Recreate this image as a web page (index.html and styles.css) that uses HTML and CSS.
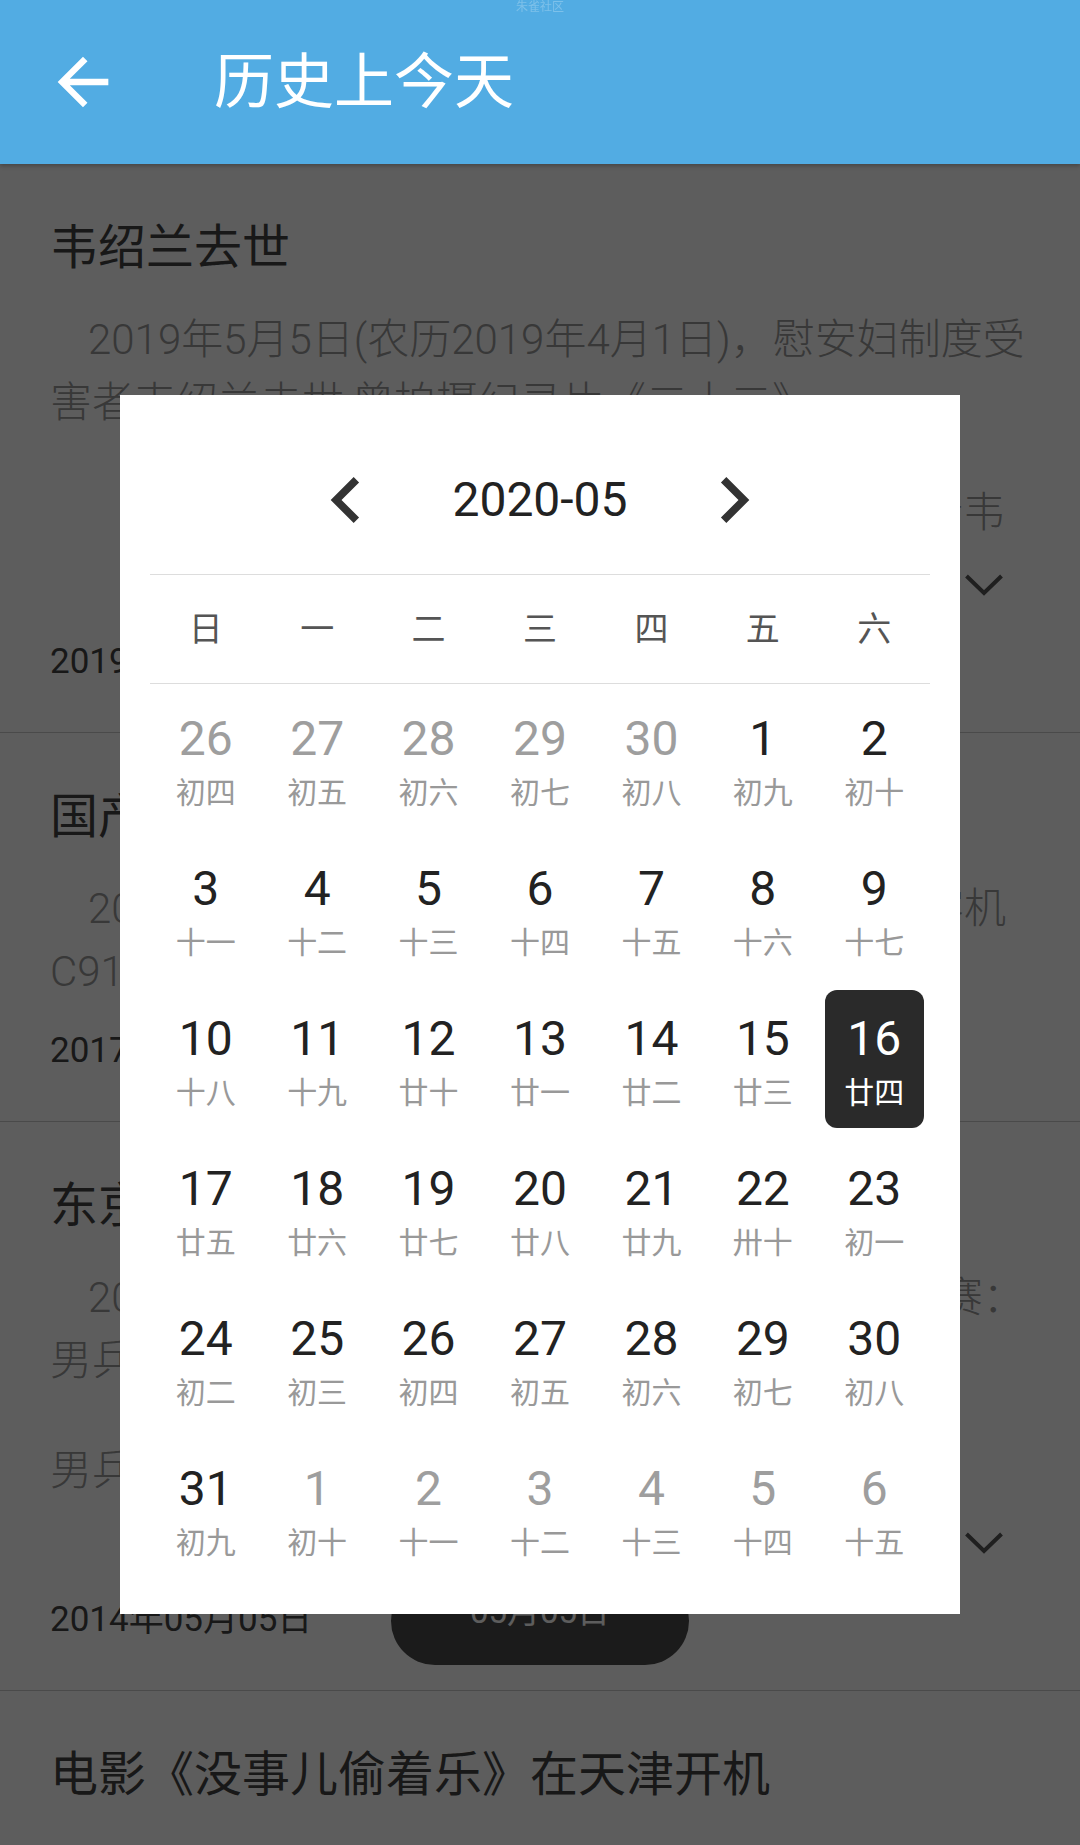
FILE: index.html
```html
<!DOCTYPE html>
<html lang="zh-CN">
<head>
  <meta charset="UTF-8" />
  <meta name="viewport" content="width=device-width, initial-scale=1.0"/>
  <title>历史上今天</title>
  <link rel="stylesheet" href="styles.css">
</head>
<body>
  <header class="topbar">
    <span class="watermark">朱雀社区</span>
    <svg class="back" viewBox="0 0 24 24"><path d="M20 11H7.83l5.59-5.59L12 4l-8 8 8 8 1.41-1.41L7.83 13H20v-2z"/></svg>
    <h1>历史上今天</h1>
  </header>

  <main class="list">
    <section class="event">
      <h2>韦绍兰去世</h2>
      <p class="summary">2019年5月5日(农历2019年4月1日)，慰安妇制度受害者韦绍兰去世,曾拍摄纪录片《二十二》</p>
      <p class="more">　　同年8月,广西荔浦县举行追思会，悼念受害者韦绍兰，众多志愿者自发前来送别。</p>
      <svg class="toggle" viewBox="0 0 48 48"><polyline points="6.5,15 24,32 41.5,15"/></svg>
      <div class="date">2019年05月05日</div>
    </section>

    <section class="event">
      <h2>国产大飞机C919首飞成功</h2>
      <p class="summary">2017年5月5日(农历2017年4月10日)，国产大客机C919在上海浦东国际机场成功首飞。</p>
      <div class="date">2017年05月05日</div>
    </section>

    <section class="event">
      <h2>东京世乒赛中国男团夺冠</h2>
      <p class="summary">2014年5月5日(农历2014年4月7日)，东京世乒赛：男乒决赛中国队3比0击败德国队夺冠。</p>
      <p class="more">男乒队员：马龙、许昕、张继科、樊振东。</p>
      <svg class="toggle" viewBox="0 0 48 48"><polyline points="6.5,15 24,32 41.5,15"/></svg>
      <div class="date">2014年05月05日</div>
    </section>

    <section class="event">
      <h2>电影《没事儿偷着乐》在天津开机</h2>
      <p class="summary">1998年5月5日(农历1998年4月10日)，电影《没事儿偷着乐》在天津开机拍摄。</p>
      <div class="date">1998年05月05日</div>
    </section>
  </main>

  <div class="today">05月05日</div>

  <div class="mask">
    <div class="picker">
      <div class="month">
        <svg viewBox="0 0 24 24"><path d="M15.41 7.41L14 6l-6 6 6 6 1.41-1.41L10.83 12z"/></svg>
        <span>2020-05</span>
        <svg viewBox="0 0 24 24"><path d="M10 6L8.59 7.41 13.17 12l-4.58 4.59L10 18l6-6z"/></svg>
      </div>

      <div class="weekdays">
        <span>日</span><span>一</span><span>二</span><span>三</span><span>四</span><span>五</span><span>六</span>
      </div>

      <div class="days">
        <div class="day other"><span class="num">26</span><span class="lunar">初四</span></div>
        <div class="day other"><span class="num">27</span><span class="lunar">初五</span></div>
        <div class="day other"><span class="num">28</span><span class="lunar">初六</span></div>
        <div class="day other"><span class="num">29</span><span class="lunar">初七</span></div>
        <div class="day other"><span class="num">30</span><span class="lunar">初八</span></div>
        <div class="day"><span class="num">1</span><span class="lunar">初九</span></div>
        <div class="day"><span class="num">2</span><span class="lunar">初十</span></div>

        <div class="day"><span class="num">3</span><span class="lunar">十一</span></div>
        <div class="day"><span class="num">4</span><span class="lunar">十二</span></div>
        <div class="day"><span class="num">5</span><span class="lunar">十三</span></div>
        <div class="day"><span class="num">6</span><span class="lunar">十四</span></div>
        <div class="day"><span class="num">7</span><span class="lunar">十五</span></div>
        <div class="day"><span class="num">8</span><span class="lunar">十六</span></div>
        <div class="day"><span class="num">9</span><span class="lunar">十七</span></div>

        <div class="day"><span class="num">10</span><span class="lunar">十八</span></div>
        <div class="day"><span class="num">11</span><span class="lunar">十九</span></div>
        <div class="day"><span class="num">12</span><span class="lunar">廿十</span></div>
        <div class="day"><span class="num">13</span><span class="lunar">廿一</span></div>
        <div class="day"><span class="num">14</span><span class="lunar">廿二</span></div>
        <div class="day"><span class="num">15</span><span class="lunar">廿三</span></div>
        <div class="day on"><span class="num">16</span><span class="lunar">廿四</span></div>

        <div class="day"><span class="num">17</span><span class="lunar">廿五</span></div>
        <div class="day"><span class="num">18</span><span class="lunar">廿六</span></div>
        <div class="day"><span class="num">19</span><span class="lunar">廿七</span></div>
        <div class="day"><span class="num">20</span><span class="lunar">廿八</span></div>
        <div class="day"><span class="num">21</span><span class="lunar">廿九</span></div>
        <div class="day"><span class="num">22</span><span class="lunar">卅十</span></div>
        <div class="day"><span class="num">23</span><span class="lunar">初一</span></div>

        <div class="day"><span class="num">24</span><span class="lunar">初二</span></div>
        <div class="day"><span class="num">25</span><span class="lunar">初三</span></div>
        <div class="day"><span class="num">26</span><span class="lunar">初四</span></div>
        <div class="day"><span class="num">27</span><span class="lunar">初五</span></div>
        <div class="day"><span class="num">28</span><span class="lunar">初六</span></div>
        <div class="day"><span class="num">29</span><span class="lunar">初七</span></div>
        <div class="day"><span class="num">30</span><span class="lunar">初八</span></div>

        <div class="day"><span class="num">31</span><span class="lunar">初九</span></div>
        <div class="day other"><span class="num">1</span><span class="lunar">初十</span></div>
        <div class="day other"><span class="num">2</span><span class="lunar">十一</span></div>
        <div class="day other"><span class="num">3</span><span class="lunar">十二</span></div>
        <div class="day other"><span class="num">4</span><span class="lunar">十三</span></div>
        <div class="day other"><span class="num">5</span><span class="lunar">十四</span></div>
        <div class="day other"><span class="num">6</span><span class="lunar">十五</span></div>
      </div>
    </div>
  </div>
</body>
</html>
```

FILE: styles.css
```css
* {
  box-sizing: border-box;
}

body {
  margin: 0;
  background: #fff;
  color: #222;
  font-family: Roboto, "Noto Sans CJK SC", sans-serif;
}

/* top bar */
.topbar {
  position: relative;
  z-index: 2;
  display: flex;
  align-items: center;
  height: 164px;
  padding-left: 45px;
  background: #52ace3;
  box-shadow: 0 2px 4px rgba(0, 0, 0, 0.25);
}

.watermark {
  position: absolute;
  top: 0;
  left: 50%;
  transform: translateX(-50%);
  font-size: 12px;
  line-height: 14px;
  color: rgba(255, 255, 255, 0.25);
}

.back {
  display: block;
  width: 76px;
  height: 76px;
  fill: #fff;
}

.topbar h1 {
  margin: 0 0 0 93px;
  padding-top: 2px;
  font-size: 60px;
  font-weight: 400;
  line-height: 60px;
  color: #fff;
}

/* event list */
.list {
  height: calc(100vh - 164px);
  overflow: hidden;
}

.event {
  display: flex;
  flex-direction: column;
  padding: 54px 50px 46px;
  border-bottom: 1px solid #ccc;
}

.event h2 {
  margin: 0;
  font-size: 48px;
  font-weight: 400;
  line-height: 60px;
  color: #444;
  white-space: nowrap;
}

.event p {
  margin: 0;
  font-size: 42px;
  font-weight: 300;
  line-height: 63px;
  color: #999;
}

.event .summary {
  margin-top: 30px;
  text-indent: 38px;
}

.event .more {
  margin-top: 47px;
  max-height: 63px;
  overflow: hidden;
}

.toggle {
  display: block;
  align-self: flex-end;
  width: 48px;
  height: 48px;
  margin: 17px 22px 5px 0;
  fill: none;
  stroke: #555;
  stroke-width: 4;
}

.date {
  margin-top: 24px;
  font-size: 35px;
  line-height: 48px;
  color: #444;
}

.today {
  position: fixed;
  left: 50%;
  bottom: 180px;
  width: 298px;
  height: 88px;
  margin-left: -149px;
  padding-bottom: 18px;
  border-radius: 44px;
  background: #4a4a4a;
  color: #fff;
  font-size: 33px;
  line-height: 70px;
  text-align: center;
}

/* calendar dialog */
.mask {
  position: fixed;
  top: 164px;
  left: 0;
  right: 0;
  bottom: 0;
  z-index: 1;
  display: flex;
  align-items: center;
  justify-content: center;
  background: rgba(0, 0, 0, 0.635);
}

.picker {
  width: 840px;
  padding: 30px;
  background: #fff;
}

.month {
  display: flex;
  align-items: center;
  justify-content: center;
  height: 150px;
  border-bottom: 1px solid #ddd;
}

.month svg {
  width: 92px;
  height: 92px;
  fill: #333;
}

.month span {
  width: 296px;
  font-size: 48px;
  line-height: 1;
  text-align: center;
  color: #222;
}

.weekdays {
  display: grid;
  grid-template-columns: repeat(7, 1fr);
  height: 109px;
  border-bottom: 1px solid #ddd;
  font-size: 34px;
  line-height: 108px;
  text-align: center;
  color: #555;
}

.days {
  display: grid;
  grid-template-columns: repeat(7, 1fr);
}

.day {
  height: 138px;
  margin: 6px;
  padding-top: 21px;
  border-radius: 12px;
  text-align: center;
}

.num {
  display: block;
  font-size: 48px;
  line-height: 56px;
  color: #222;
}

.lunar {
  display: block;
  margin-top: 6px;
  font-size: 30px;
  line-height: 40px;
  color: #999;
}

.day.other .num {
  color: #9e9e9e;
}

.day.on {
  background: #2a2a2a;
}

.day.on .num,
.day.on .lunar {
  color: #fff;
}
```
